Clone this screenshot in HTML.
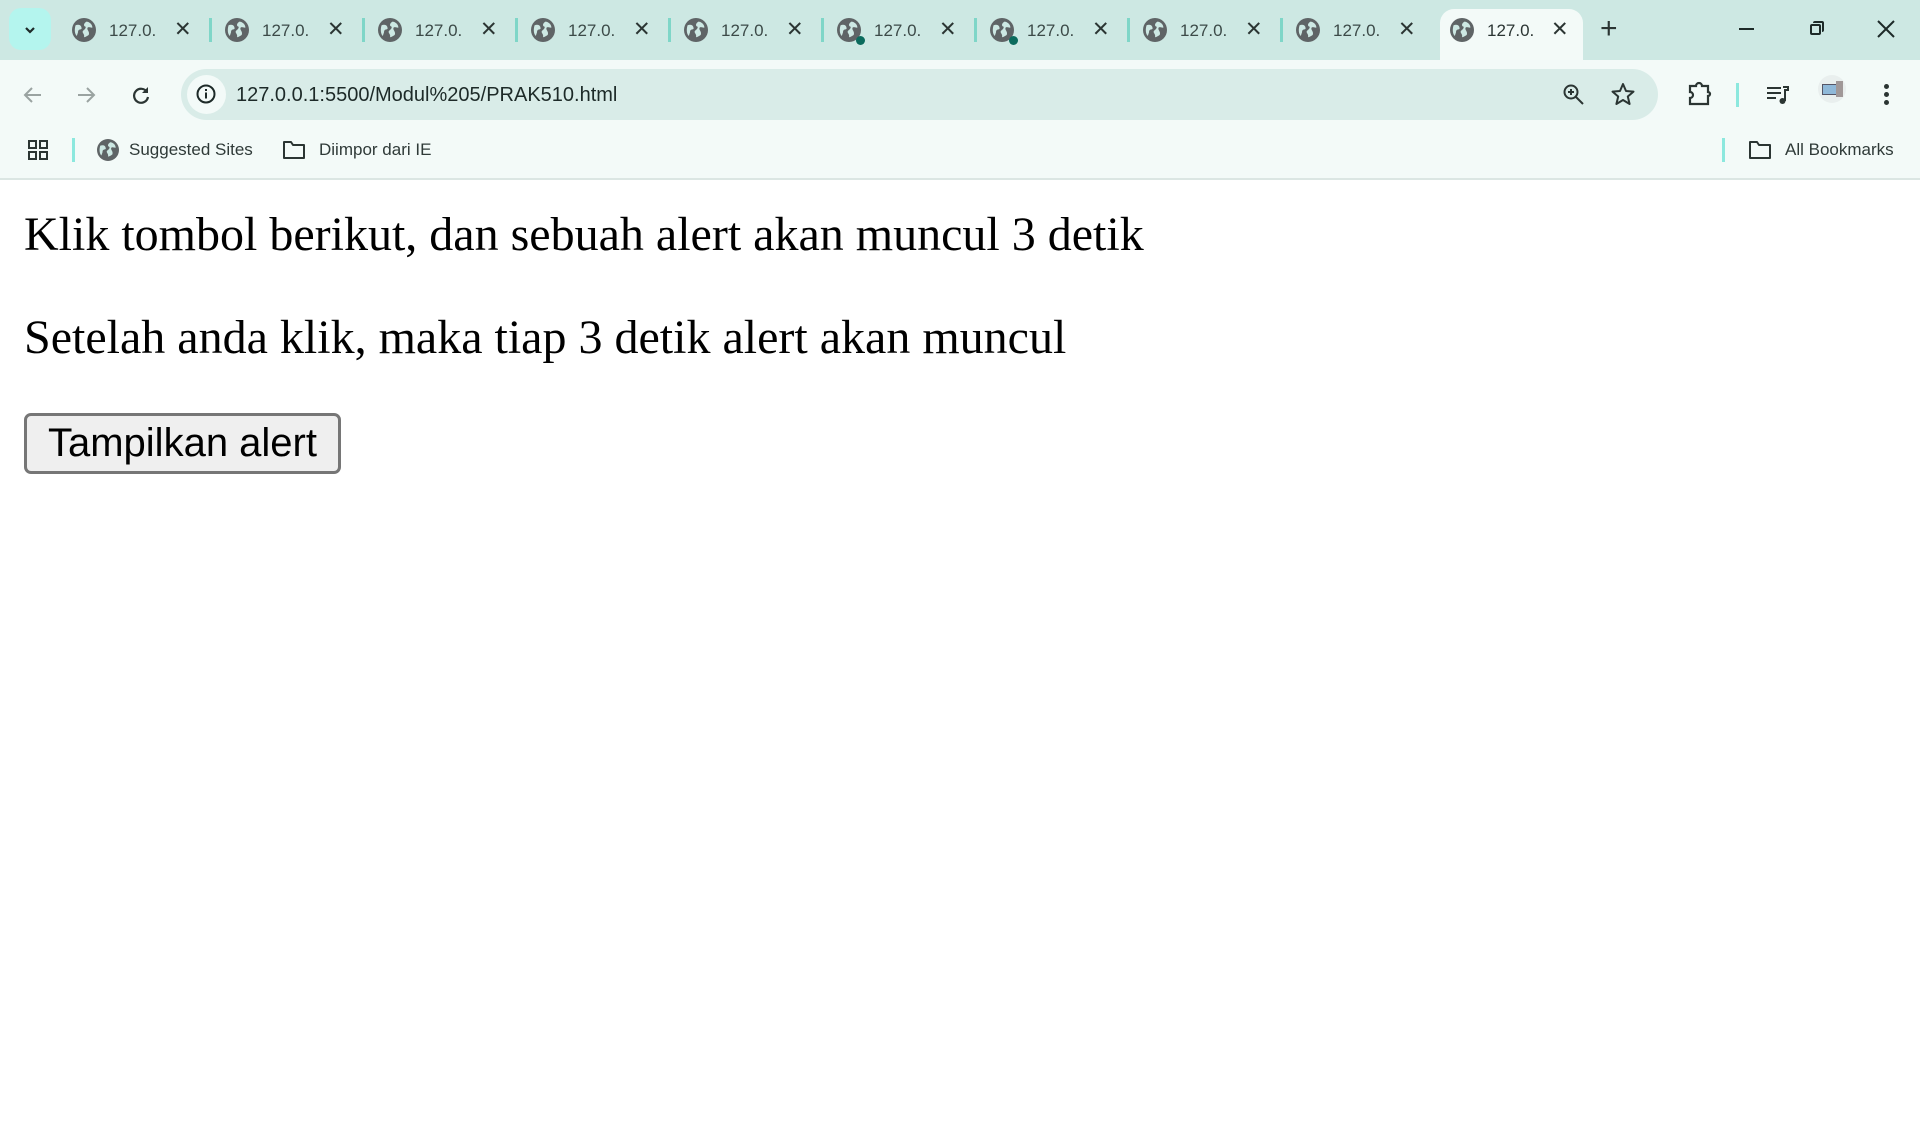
<!DOCTYPE html>
<html><head><meta charset="utf-8"><style>
*{margin:0;padding:0;box-sizing:border-box}
body{width:1920px;height:1128px;background:#fff;position:relative;overflow:hidden;font-family:"Liberation Sans",sans-serif}
.abs{position:absolute}
#tabbar{left:0;top:0;width:1920px;height:60px;background:#cde8e3}
#toolbar{left:0;top:60px;width:1920px;height:120px;background:#f3faf8;border-bottom:2px solid #dbe6e3}
.tt{font-size:17px;color:#3c4a48;top:21px}
.x{font-size:21px;color:#2b3533;top:17px}
.sep{width:3px;height:24px;background:#7fd6c8;top:18px}
.btxt{font-size:17px;color:#2f3a38}
</style></head><body>
<div id="tabbar" class="abs"></div>
<div class="abs" style="left:9px;top:8px;width:42px;height:42px;border-radius:12px;background:#b4f5ee"></div>
<svg class="abs" style="left:21px;top:21px" width="18" height="18" viewBox="0 0 18 18"><path d="M5 7l4 4 4-4" stroke="#1d2a28" stroke-width="2.2" fill="none"/></svg>
<div id="toolbar" class="abs"></div>
<div class="abs" style="left:1440px;top:9px;width:143px;height:60px;background:#f3faf8;border-radius:14px 14px 0 0"></div>

<svg width="0" height="0" style="position:absolute"><defs><symbol id="g" viewBox="0 0 20 20"><circle cx="10" cy="10" r="10" fill="#5f6466"/><path d="M3 6c3-1 5 0 5 3-1 1-3 0-3 3l-1 3C2 13 2 9 3 6zM12 3c2 0 5 2 5 5-2 0-3-1-4 0-1 2 2 3 1 6-1 1-3 2-4 2 1-3-3-4 0-6 1-1 2-2 1-3-1 0-2-2 1-4z" fill="#cde8e3"/></symbol></defs></svg>

<svg class="abs" style="left:72px;top:18px" width="24" height="24"><use href="#g"/></svg><div class="abs tt" style="left:109px">127.0.</div><div class="abs x" style="left:174px">✕</div><div class="abs sep" style="left:209px"></div>
<svg class="abs" style="left:225px;top:18px" width="24" height="24"><use href="#g"/></svg><div class="abs tt" style="left:262px">127.0.</div><div class="abs x" style="left:327px">✕</div><div class="abs sep" style="left:362px"></div>
<svg class="abs" style="left:378px;top:18px" width="24" height="24"><use href="#g"/></svg><div class="abs tt" style="left:415px">127.0.</div><div class="abs x" style="left:480px">✕</div><div class="abs sep" style="left:515px"></div>
<svg class="abs" style="left:531px;top:18px" width="24" height="24"><use href="#g"/></svg><div class="abs tt" style="left:568px">127.0.</div><div class="abs x" style="left:633px">✕</div><div class="abs sep" style="left:668px"></div>
<svg class="abs" style="left:684px;top:18px" width="24" height="24"><use href="#g"/></svg><div class="abs tt" style="left:721px">127.0.</div><div class="abs x" style="left:786px">✕</div><div class="abs sep" style="left:821px"></div>
<svg class="abs" style="left:837px;top:18px" width="24" height="24"><use href="#g"/></svg><div class="abs" style="left:856px;top:36px;width:9px;height:9px;border-radius:50%;background:#0b6b5d"></div><div class="abs tt" style="left:874px">127.0.</div><div class="abs x" style="left:939px">✕</div><div class="abs sep" style="left:974px"></div>
<svg class="abs" style="left:990px;top:18px" width="24" height="24"><use href="#g"/></svg><div class="abs" style="left:1009px;top:36px;width:9px;height:9px;border-radius:50%;background:#0b6b5d"></div><div class="abs tt" style="left:1027px">127.0.</div><div class="abs x" style="left:1092px">✕</div><div class="abs sep" style="left:1127px"></div>
<svg class="abs" style="left:1143px;top:18px" width="24" height="24"><use href="#g"/></svg><div class="abs tt" style="left:1180px">127.0.</div><div class="abs x" style="left:1245px">✕</div><div class="abs sep" style="left:1280px"></div>
<svg class="abs" style="left:1296px;top:18px" width="24" height="24"><use href="#g"/></svg><div class="abs tt" style="left:1333px">127.0.</div><div class="abs x" style="left:1398px">✕</div>
<svg class="abs" style="left:1450px;top:18px" width="24" height="24"><use href="#g"/></svg><div class="abs tt" style="left:1487px;color:#2b3533">127.0.</div><div class="abs x" style="left:1551px">✕</div>
<div class="abs" style="left:1600px;top:12px;font-size:30px;color:#2b3533">+</div>
<div class="abs" style="left:1739px;top:28px;width:15px;height:2px;background:#1d2a28"></div>
<div class="abs" style="left:1810px;top:24px;width:11px;height:11px;border:2px solid #1d2a28;border-radius:2px"></div>
<div class="abs" style="left:1813px;top:21px;width:11px;height:11px;border-top:2px solid #1d2a28;border-right:2px solid #1d2a28;border-radius:2px"></div>
<svg class="abs" style="left:1876px;top:19px" width="20" height="20"><path d="M2 2L18 18M18 2L2 18" stroke="#1d2a28" stroke-width="2"/></svg>

<svg class="abs" style="left:22px;top:84px" width="22" height="22"><path d="M19 11H4M10 4l-7 7 7 7" stroke="#9aa3a1" stroke-width="2" fill="none"/></svg>
<svg class="abs" style="left:75px;top:84px" width="22" height="22"><path d="M3 11h15M12 4l7 7-7 7" stroke="#9aa3a1" stroke-width="2" fill="none"/></svg>
<svg class="abs" style="left:130px;top:84px" width="22" height="22"><path d="M17 8A7 7 0 1 0 18 13" stroke="#2b3533" stroke-width="2.2" fill="none"/><path d="M18 3v6h-6" fill="#2b3533"/></svg>
<div class="abs" style="left:181px;top:69px;width:1477px;height:51px;border-radius:26px;background:#d9ece8"></div>
<div class="abs" style="left:187px;top:75px;width:39px;height:39px;border-radius:50%;background:#f3faf8"></div>
<svg class="abs" style="left:195px;top:83px" width="22" height="22"><circle cx="11" cy="11" r="8.5" stroke="#1d2a28" stroke-width="2" fill="none"/><rect x="10" y="9.5" width="2" height="6" fill="#1d2a28"/><rect x="10" y="6" width="2" height="2" fill="#1d2a28"/></svg>
<div class="abs" style="left:236px;top:84px;font-size:20px;color:#1d2a28">127.0.0.1:5500/Modul%205/PRAK510.html</div>
<svg class="abs" style="left:1562px;top:83px" width="24" height="24"><circle cx="9" cy="9" r="6.5" stroke="#2b3533" stroke-width="2" fill="none"/><path d="M14 14l7 7M9 6v6M6 9h6" stroke="#2b3533" stroke-width="2"/></svg>
<svg class="abs" style="left:1611px;top:82px" width="24" height="24"><path d="M12 2l3 7 7.5.6-5.7 4.9 1.8 7.5L12 18l-6.6 4 1.8-7.5L1.5 9.6 9 9z" stroke="#2b3533" stroke-width="2" fill="none" stroke-linejoin="round"/></svg>
<svg class="abs" style="left:1687px;top:81px" width="26" height="26"><path d="M3 5h6a3 3 0 0 1 6 0h6v6a2 2 0 0 1 0 4v8H3v-6a3 3 0 0 0 0-6z" stroke="#2b3533" stroke-width="2.2" fill="none"/></svg>
<div class="abs" style="left:1736px;top:83px;width:3px;height:24px;background:#8ce8de"></div>
<svg class="abs" style="left:1766px;top:84px" width="24" height="22"><path d="M1 4h14M1 9h14M1 14h9" stroke="#2b3533" stroke-width="2"/><path d="M17 3h5v3h-3v11" stroke="#2b3533" stroke-width="2" fill="none"/><circle cx="16.5" cy="17" r="3" fill="#2b3533"/></svg>
<div class="abs" style="left:1818px;top:75px;width:28px;height:28px;border-radius:50%;background:#e9efee"></div>
<div class="abs" style="left:1822px;top:84px;width:17px;height:11px;background:#8fb8d8;border:1px solid #556"></div>
<div class="abs" style="left:1836px;top:81px;width:7px;height:16px;background:#a09898"></div>
<div class="abs" style="left:1884px;top:84px;width:5px;height:5px;border-radius:50%;background:#2b3533"></div>
<div class="abs" style="left:1884px;top:92px;width:5px;height:5px;border-radius:50%;background:#2b3533"></div>
<div class="abs" style="left:1884px;top:100px;width:5px;height:5px;border-radius:50%;background:#2b3533"></div>

<svg class="abs" style="left:28px;top:140px" width="20" height="20"><g fill="none" stroke="#2b3533" stroke-width="2"><rect x="1" y="1" width="7" height="7"/><rect x="12" y="1" width="7" height="7"/><rect x="1" y="12" width="7" height="7"/><rect x="12" y="12" width="7" height="7"/></g></svg>
<div class="abs" style="left:72px;top:138px;width:3px;height:24px;background:#8ce8de"></div>
<svg class="abs" style="left:97px;top:139px" width="22" height="22"><use href="#g"/></svg>
<div class="abs btxt" style="left:129px;top:140px">Suggested Sites</div>
<svg class="abs" style="left:282px;top:140px" width="24" height="20"><path d="M2 2h7l2 3h11v13H2z" stroke="#2b3533" stroke-width="2" fill="none" stroke-linejoin="round"/></svg>
<div class="abs btxt" style="left:319px;top:140px">Diimpor dari IE</div>
<div class="abs" style="left:1722px;top:138px;width:3px;height:24px;background:#8ce8de"></div>
<svg class="abs" style="left:1748px;top:140px" width="24" height="20"><path d="M2 2h7l2 3h11v13H2z" stroke="#2b3533" stroke-width="2" fill="none" stroke-linejoin="round"/></svg>
<div class="abs btxt" style="left:1785px;top:140px">All Bookmarks</div>

<div class="abs" style="left:24px;top:207px;font-family:'Liberation Serif',serif;font-size:48px;line-height:55px;color:#000;white-space:nowrap">Klik tombol berikut, dan sebuah alert akan muncul 3 detik</div>
<div class="abs" style="left:24px;top:310px;font-family:'Liberation Serif',serif;font-size:48px;line-height:55px;color:#000;white-space:nowrap">Setelah anda klik, maka tiap 3 detik alert akan muncul</div>
<div class="abs" style="left:24px;top:413px;width:317px;height:61px;border:3px solid #767676;border-radius:7px;background:#efefef;font-size:40px;line-height:55px;text-align:center;color:#000">Tampilkan alert</div>
</body></html>
